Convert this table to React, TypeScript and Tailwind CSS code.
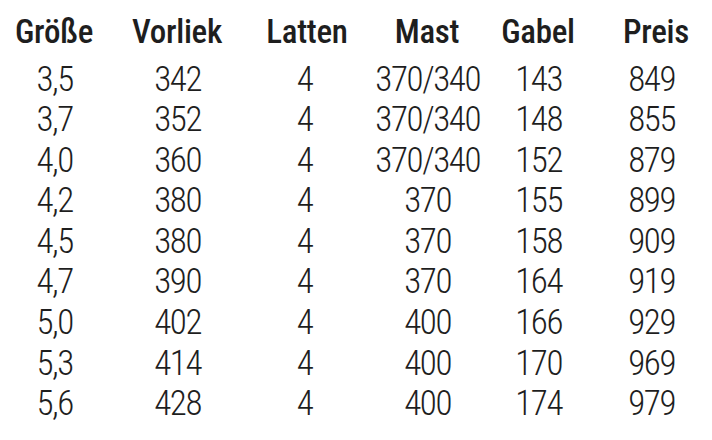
const headers = ["Größe", "Vorliek", "Latten", "Mast", "Gabel", "Preis"];
const rows = [
  ["3,5", "342", "4", "370/340", "143", "849"],
  ["3,7", "352", "4", "370/340", "148", "855"],
  ["4,0", "360", "4", "370/340", "152", "879"],
  ["4,2", "380", "4", "370", "155", "899"],
  ["4,5", "380", "4", "370", "158", "909"],
  ["4,7", "390", "4", "370", "164", "919"],
  ["5,0", "402", "4", "400", "166", "929"],
  ["5,3", "414", "4", "400", "170", "969"],
  ["5,6", "428", "4", "400", "174", "979"],
];

export default function App() {
  return (
    <div className="w-[712px] h-[440px] bg-white text-[#1e1e1e] pt-[12px] font-['Roboto_Condensed',sans-serif] overflow-hidden">
      <div className="grid grid-cols-[108px_138px_122px_118px_104px_122px] text-center">
        {headers.map((h) => (
          <div
            key={h}
            className={
              h === "Preis"
                ? "text-[33px] font-medium leading-[40px] mb-[7.5px] tracking-[-0.3px] pl-[10px]"
                : "text-[33px] font-medium leading-[40px] mb-[7.5px] tracking-[-0.3px]"
            }
          >
            {h}
          </div>
        ))}
        {rows.map((r, i) =>
          r.map((c, j) => (
            <div
              key={`${i}-${j}`}
              className={
                j === 2
                  ? "text-[35px] font-light leading-[40.6px] tracking-[-1.4px] pr-[5px]"
                  : "text-[35px] font-light leading-[40.6px] tracking-[-1.4px] pl-[1.4px]"
              }
            >
              {c}
            </div>
          ))
        )}
      </div>
    </div>
  );
}
